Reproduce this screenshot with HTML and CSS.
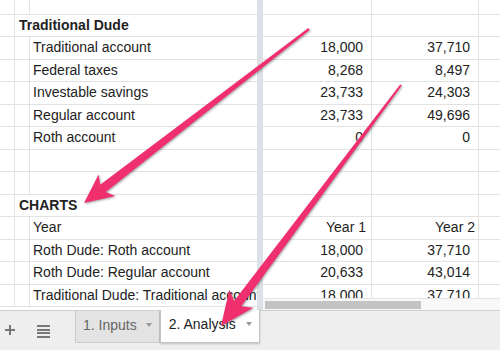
FILE: index.html
```html
<!DOCTYPE html>
<html lang="en">
<head>
    <meta charset="UTF-8">
    <meta name="viewport" content="width=device-width, initial-scale=1.0">
    <title>Analysis</title>
    <link rel="stylesheet" href="styles.css">
</head>
<body>
    <div class="sheet">
        <div class="frozen">
            <div class="row top"><div class="c a"></div><div class="c b"></div><div class="c name"></div></div>
            <div class="row"><div class="c a"></div><div class="c bc bold">Traditional Dude</div></div>
            <div class="row"><div class="c a"></div><div class="c b"></div><div class="c name">Traditional account</div></div>
            <div class="row"><div class="c a"></div><div class="c b"></div><div class="c name">Federal taxes</div></div>
            <div class="row"><div class="c a"></div><div class="c b"></div><div class="c name">Investable savings</div></div>
            <div class="row"><div class="c a"></div><div class="c b"></div><div class="c name">Regular account</div></div>
            <div class="row"><div class="c a"></div><div class="c b"></div><div class="c name">Roth account</div></div>
            <div class="row"><div class="c a"></div><div class="c b"></div><div class="c name"></div></div>
            <div class="row"><div class="c a"></div><div class="c b"></div><div class="c name"></div></div>
            <div class="row"><div class="c a"></div><div class="c bc bold">CHARTS</div></div>
            <div class="row"><div class="c a"></div><div class="c b"></div><div class="c name">Year</div></div>
            <div class="row"><div class="c a"></div><div class="c b"></div><div class="c name">Roth Dude: Roth account</div></div>
            <div class="row"><div class="c a"></div><div class="c b"></div><div class="c name">Roth Dude: Regular account</div></div>
            <div class="row"><div class="c a"></div><div class="c b"></div><div class="c name">Traditional Dude: Traditional account</div></div>
        </div>
        <div class="divider"></div>
        <div class="scroll">
            <div class="cells">
                <div class="row top"><div class="c d"></div><div class="c e"></div><div class="c f"></div></div>
                <div class="row"><div class="c d"></div><div class="c e"></div><div class="c f"></div></div>
                <div class="row"><div class="c d num">18,000</div><div class="c e num">37,710</div><div class="c f"></div></div>
                <div class="row"><div class="c d num">8,268</div><div class="c e num">8,497</div><div class="c f"></div></div>
                <div class="row"><div class="c d num">23,733</div><div class="c e num">24,303</div><div class="c f"></div></div>
                <div class="row"><div class="c d num">23,733</div><div class="c e num">49,696</div><div class="c f"></div></div>
                <div class="row"><div class="c d num">0</div><div class="c e num">0</div><div class="c f"></div></div>
                <div class="row"><div class="c d"></div><div class="c e"></div><div class="c f"></div></div>
                <div class="row"><div class="c d"></div><div class="c e"></div><div class="c f"></div></div>
                <div class="row"><div class="c d"></div><div class="c e"></div><div class="c f"></div></div>
                <div class="row"><div class="c d num yr1">Year 1</div><div class="c e num yr2">Year 2</div><div class="c f"></div></div>
                <div class="row"><div class="c d num">18,000</div><div class="c e num">37,710</div><div class="c f"></div></div>
                <div class="row"><div class="c d num">20,633</div><div class="c e num">43,014</div><div class="c f"></div></div>
                <div class="row"><div class="c d num">18,000</div><div class="c e num">37,710</div><div class="c f"></div></div>
            </div>
            <div class="hscroll"><div class="thumb"></div></div>
        </div>
    </div>

    <div class="tabbar">
        <div class="add"></div>
        <div class="menu"><span></span><span></span><span></span><span></span></div>
        <div class="tab">1. Inputs<i class="caret"></i></div>
        <div class="tab active">2. Analysis<i class="caret"></i></div>
    </div>

    <!-- skitch style arrows drawn on top -->
    <svg class="arrows" width="500" height="350" viewBox="0 0 500 350">
        <polygon points="309.7,29.9 105.8,191.9 115.2,196 84,203 98.6,174.6 100.2,184.7 308.3,28.1"/>
        <polygon points="401.8,85.6 241.3,306.3 253.3,307.8 221,326 229.3,289.8 234.1,300.9 400.2,84.4"/>
    </svg>
</body>
</html>
```

FILE: styles.css
```css
* { margin: 0; padding: 0; box-sizing: border-box; }
body {
    position: relative;
    width: 500px;
    height: 350px;
    overflow: hidden;
    background: #fff;
    font-family: "Liberation Sans", Arial, sans-serif;
    font-size: 14px;
    color: #222;
}

/* grid */
.sheet {
    display: flex;
    height: 310px;
}
.frozen {
    width: 257px;
    height: 310px;
    overflow: hidden;
}
.divider {
    width: 6px;
    background: #dde1e7;
}
.scroll {
    flex: 1;
    display: flex;
    flex-direction: column;
}
.cells {
    height: 298px;
    overflow: hidden;
}
.row {
    display: flex;
    height: 22.5px;
    border-bottom: 1px solid #e2e2e2;
}
.row.top { height: 14.5px; }
.c {
    height: 100%;
    line-height: 21.5px;
    white-space: nowrap;
    overflow: hidden;
}
.c.a, .c.b { width: 15px; border-right: 1px solid #e2e2e2; }
.c.bc { flex: 1; padding-left: 4px; }
.c.name { flex: 1; padding-left: 3px; }
.c.d { width: 109px; border-right: 1px solid #e2e2e2; }
.c.e { width: 107px; border-right: 1px solid #e2e2e2; }
.c.f { flex: 1; }
.bold { font-weight: bold; }
.num { text-align: right; padding-right: 8px; }
.num.yr1 { padding-right: 5px; }
.num.yr2 { padding-right: 3px; }

.hscroll {
    height: 12px;
    border-top: 1px solid #e4e4e4;
    background: #f8f8f8;
    padding: 2px 0 0 2px;
}
.hscroll .thumb {
    width: 156px;
    height: 8px;
    background: #c3c3c3;
}

/* sheet tabs */
.tabbar {
    display: flex;
    align-items: flex-start;
    height: 40px;
    background: #eeeeee;
    border-top: 1px solid #cfcfcf;
}
.add {
    position: relative;
    width: 10px;
    height: 10px;
    margin: 14px 0 0 5px;
}
.add::before, .add::after {
    content: "";
    position: absolute;
    background: #777;
}
.add::before { left: 0; top: 4.25px; width: 10px; height: 1.5px; }
.add::after { left: 4.25px; top: 0; width: 1.5px; height: 10px; }
.menu {
    display: flex;
    flex-direction: column;
    gap: 1.5px;
    width: 13px;
    margin: 14px 0 0 22px;
}
.menu span {
    height: 2px;
    background: #777;
}
.tab {
    display: flex;
    align-items: center;
    height: 32px;
    padding: 0 7px 3px 7px;
    margin-left: 25px;
    background: #e3e3e3;
    border: 1px solid #cbcbcb;
    border-top: none;
    color: #666;
}
.tab.active {
    margin: -1px 0 0 0;
    height: 33px;
    padding: 0 7px 4px 8px;
    background: #fff;
    border-color: #c4c4c4;
    color: #222;
    box-shadow: 0 1px 2px rgba(0, 0, 0, 0.2);
}
.caret {
    width: 0;
    height: 0;
    margin-left: 9px;
    border-left: 3.5px solid transparent;
    border-right: 3.5px solid transparent;
    border-top: 4px solid #999;
}
.tab.active .caret { margin-left: 10px; }

/* annotation arrows */
.arrows {
    position: absolute;
    left: 0;
    top: 0;
    pointer-events: none;
    fill: #ef2f6e;
    filter: drop-shadow(1px 1px 1px rgba(0, 0, 0, 0.35));
}
```
